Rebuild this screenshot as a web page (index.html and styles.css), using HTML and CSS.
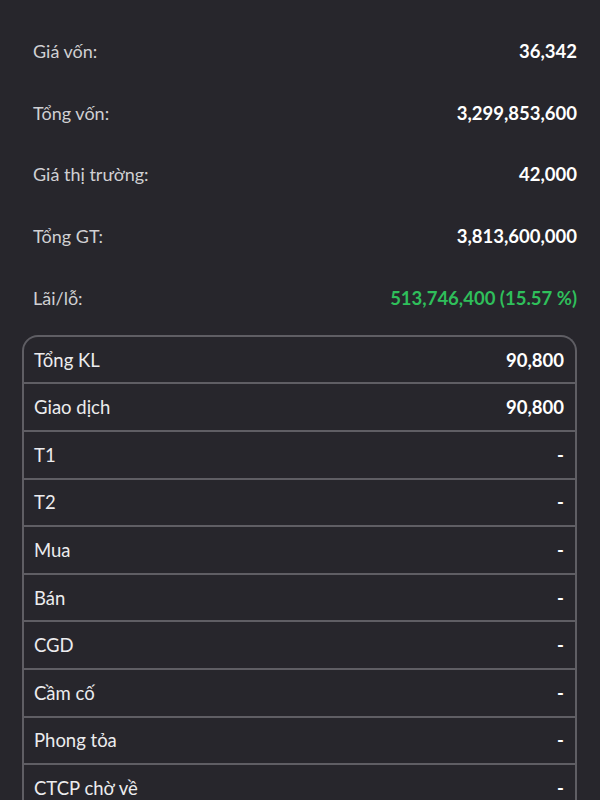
FILE: index.html
```html
<!DOCTYPE html>
<html lang="vi">
<head>
<meta charset="utf-8">
<link rel="stylesheet" href="styles.css">
</head>
<body>
<div class="page">
  <div class="summary">
    <div class="srow"><span class="label">Giá vốn:</span><span class="value">36,342</span></div>
    <div class="srow"><span class="label">Tổng vốn:</span><span class="value">3,299,853,600</span></div>
    <div class="srow"><span class="label">Giá thị trường:</span><span class="value">42,000</span></div>
    <div class="srow"><span class="label">Tổng GT:</span><span class="value">3,813,600,000</span></div>
    <div class="srow"><span class="label">Lãi/lỗ:</span><span class="value up">513,746,400 (15.57 %)</span></div>
  </div>
  <div class="table">
    <div class="trow"><span class="tlabel">Tổng KL</span><span class="tvalue">90,800</span></div>
    <div class="trow"><span class="tlabel">Giao dịch</span><span class="tvalue">90,800</span></div>
    <div class="trow"><span class="tlabel">T1</span><span class="tvalue">-</span></div>
    <div class="trow"><span class="tlabel">T2</span><span class="tvalue">-</span></div>
    <div class="trow"><span class="tlabel">Mua</span><span class="tvalue">-</span></div>
    <div class="trow"><span class="tlabel">Bán</span><span class="tvalue">-</span></div>
    <div class="trow"><span class="tlabel">CGD</span><span class="tvalue">-</span></div>
    <div class="trow"><span class="tlabel">Cầm cố</span><span class="tvalue">-</span></div>
    <div class="trow"><span class="tlabel">Phong tỏa</span><span class="tvalue">-</span></div>
    <div class="trow"><span class="tlabel">CTCP chờ về</span><span class="tvalue">-</span></div>
  </div>
</div>
</body>
</html>
```
FILE: styles.css
```css
html, body {
  margin: 0;
  padding: 0;
  background: #27262c;
}
body {
  font-family: Lato, "Noto Sans", sans-serif;
  font-size: 18px;
  color: #d4d4d6;
  overflow: hidden;
  height: 800px;
}
.page {
  padding: 20px 23px 0 22px;
}
.summary {
  display: flex;
  flex-direction: column;
  padding: 0 0 0 11px;
}
.srow {
  height: 61.75px;
  display: flex;
  align-items: center;
  justify-content: space-between;
}
.label {
  color: #d0d0d3;
}
.value {
  color: #ffffff;
  font-weight: 700;
  font-size: 18.5px;
}
.value.up {
  color: #2fbf5b;
}
.table {
  margin-top: 6px;
  border: 2px solid #5f5e64;
  border-bottom: none;
  border-radius: 16px 16px 0 0;
}
.trow {
  height: 45.6px;
  display: flex;
  align-items: center;
  justify-content: space-between;
  padding: 0 11px 0 10px;
  border-bottom: 2px solid #5f5e64;
}
.tlabel {
  color: #ececee;
  font-size: 18.5px;
}
.tvalue {
  color: #ffffff;
  font-weight: 700;
  font-size: 18.5px;
}
```
